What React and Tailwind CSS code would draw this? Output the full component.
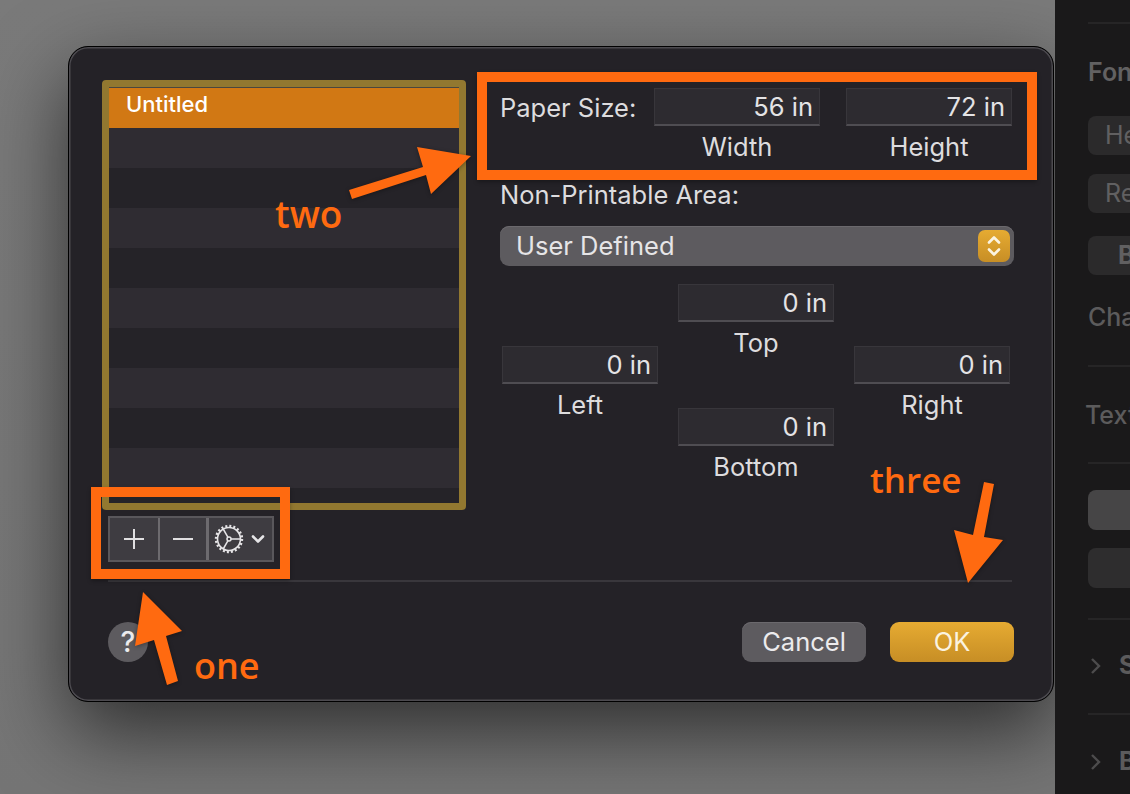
import React from "react";

const rows = [0, 1, 2, 3, 4, 5, 6, 7, 8];

const Field = ({ value, className = "" }) => (
  <div
    className={`h-[38px] bg-[#2d2b30] border border-[#38363b] border-b-2 border-b-[#4f4d52] flex items-center justify-end pr-[6px] text-[#e4e3e5] ${className}`}
  >
    {value}
  </div>
);

const LabeledField = ({ value, label, width = "w-[156px]" }) => (
  <div className={`${width} flex flex-col items-center`}>
    <Field value={value} className="w-full" />
    <div className="mt-[7px] h-[28px] leading-[28px] text-[#dddcde]">{label}</div>
  </div>
);

const GearIcon = () => (
  <svg width="30" height="30" viewBox="0 0 30 30" fill="none" stroke="#e6e5e7">
    <circle cx="15" cy="15" r="11.5" strokeWidth="1.6" />
    <circle cx="15" cy="15" r="13" strokeWidth="2.4" strokeDasharray="2 2.08" />
    <circle cx="15" cy="15" r="2" strokeWidth="1.5" />
    <path d="M17 15H26.5M14 13.3L9.2 5M14 16.7L9.2 25" strokeWidth="1.5" />
  </svg>
);

const SideChevron = () => (
  <svg width="14" height="18" viewBox="0 0 14 18" fill="none" stroke="#4d4c4d" strokeWidth="2.4" className="ml-[1px] shrink-0">
    <path d="M3 2l7 7-7 7" />
  </svg>
);

const SideBox = ({ text, bold, className = "" }) => (
  <div
    className={`h-[39px] w-full rounded-l-[8px] bg-[#2b2a2b] leading-[39px] text-[#616061] ${
      bold ? "font-bold pl-[30px]" : "pl-[17px]"
    } ${className}`}
  >
    {text}
  </div>
);

const Sidebar = () => (
  <div className="w-[75px] h-full shrink-0 bg-[#1a191a] pl-[33px] text-[25px] overflow-hidden whitespace-nowrap">
    <div className="mt-[22px] h-[2px] bg-[#262526]" />
    <div className="mt-[32px] h-[32px] leading-[32px] font-semibold text-[#626162]">Fon</div>
    <SideBox text="He" className="mt-[28px]" />
    <SideBox text="Re" className="mt-[19px]" />
    <SideBox text="B" bold className="mt-[23px]" />
    <div className="mt-[26px] h-[32px] leading-[32px] font-medium text-[#5c5b5c]">Cha</div>
    <div className="mt-[32px] h-[2px] bg-[#262526]" />
    <div className="mt-[32px] -ml-[3px] h-[32px] leading-[32px] font-medium text-[#5c5b5c]">Text</div>
    <div className="mt-[31px] h-[2px] bg-[#262526]" />
    <div className="mt-[26px] h-[40px] rounded-l-[8px] bg-[#464546]" />
    <div className="mt-[18px] h-[40px] rounded-l-[8px] bg-[#2e2d2e]" />
    <div className="mt-[30px] h-[2px] bg-[#262526]" />
    <div className="mt-[30px] h-[32px] flex items-center gap-[16px]">
      <SideChevron />
      <span className="font-bold text-[#5c5b5c]">S</span>
    </div>
    <div className="mt-[31px] h-[2px] bg-[#262526]" />
    <div className="mt-[31px] h-[32px] flex items-center gap-[16px]">
      <SideChevron />
      <span className="font-bold text-[#5c5b5c]">B</span>
    </div>
  </div>
);

const Dialog = () => (
  <div className="w-[986px] h-[656px] rounded-[20px] bg-[#242227] border border-black shadow-[inset_0_0_0_1.5px_#4c4a4f,0_30px_80px_rgba(0,0,0,0.6)] pt-[33px] pl-[33px]">
    <div className="flex">
      {/* Paper list */}
      <div className="w-[364px] h-[430px] border-[7px] border-[#927830] rounded-[4px] bg-[#252328] overflow-hidden">
        <div className="h-[1px] bg-[#4a473f]" />
        <div className="h-[40px] bg-[#d17814] pl-[17px] leading-[32px] font-medium text-white text-[22px]">
          Untitled
        </div>
        {rows.map((row) => (
          <div key={row} className={`h-[40px] ${row % 2 === 0 ? "bg-[#2f2c32]" : "bg-[#252328]"}`} />
        ))}
      </div>

      {/* Paper settings */}
      <div className="ml-[34px] w-[514px] pt-[8px] text-[25.5px] leading-none">
        <div className="flex">
          <div className="w-[154px] h-[38px] leading-[40px] text-[#dddcde]">Paper Size:</div>
          <LabeledField value="56 in" label="Width" width="w-[166px]" />
          <LabeledField value="72 in" label="Height" width="w-[166px] ml-[26px]" />
        </div>
        <div className="mt-[20px] h-[28px] leading-[28px] text-[#dddcde]">Non-Printable Area:</div>
        <div className="mt-[17px] h-[40px] rounded-[9px] bg-[#5d5b5f] shadow-[inset_0_1px_0_#6b696d] flex items-center justify-between pl-[16px] pr-[4px] text-[#e6e5e7]">
          <span>User Defined</span>
          <div className="w-[32px] h-[32px] rounded-[7px] bg-gradient-to-b from-[#e6ab32] to-[#c78e25] flex items-center justify-center">
            <svg width="18" height="26" viewBox="0 0 18 26" fill="none" stroke="#fbf3e0" strokeWidth="2.6" strokeLinecap="round" strokeLinejoin="round">
              <path d="M4 9.5L9 4.5l5 5M4 16.5l5 5 5-5" />
            </svg>
          </div>
        </div>
        <div className="mt-[18px] ml-[2px] flex gap-[20px]">
          <div className="pt-[62px]">
            <LabeledField value="0 in" label="Left" />
          </div>
          <div>
            <LabeledField value="0 in" label="Top" />
            <div className="mt-[51px]">
              <LabeledField value="0 in" label="Bottom" />
            </div>
          </div>
          <div className="pt-[62px]">
            <LabeledField value="0 in" label="Right" />
          </div>
        </div>
      </div>
    </div>

    {/* List toolbar */}
    <div className="mt-[6px] ml-[6px] w-[166px] h-[46px] flex bg-[#3e3c41] border-2 border-[#59575b]">
      <div className="w-[50px] flex items-center justify-center border-r-2 border-[#6d6b6f]">
        <svg width="22" height="22" viewBox="0 0 22 22" stroke="#e0dfe1" strokeWidth="2">
          <path d="M11 1v20M1 11h20" />
        </svg>
      </div>
      <div className="w-[49px] flex items-center justify-center border-r-[3px] border-[#6d6b6f]">
        <svg width="22" height="22" viewBox="0 0 22 22" stroke="#e0dfe1" strokeWidth="2">
          <path d="M1 11h20" />
        </svg>
      </div>
      <div className="flex-1 flex items-center pl-[5px] gap-[7px]">
        <GearIcon />
        <svg width="14" height="10" viewBox="0 0 14 10" fill="none" stroke="#e6e5e7" strokeWidth="2.6" strokeLinecap="round" strokeLinejoin="round">
          <path d="M2 2.5l5 5 5-5" />
        </svg>
      </div>
    </div>

    <div className="mt-[18px] ml-[6px] w-[904px] h-[2px] bg-[#39373c]" />

    {/* Footer */}
    <div className="mt-[40px] ml-[6px] w-[906px] flex items-center text-[25.5px] text-[#ecebed]">
      <div className="w-[40px] h-[40px] rounded-full bg-[#5d5b5f] flex items-center justify-center text-[28px] font-medium">?</div>
      <div className="ml-auto w-[124px] h-[40px] rounded-[9px] bg-[#5d5b5f] shadow-[inset_0_1px_0_#6b696d] flex items-center justify-center">
        Cancel
      </div>
      <div className="ml-[24px] w-[124px] h-[40px] rounded-[9px] bg-gradient-to-b from-[#e6ab32] to-[#c78e25] flex items-center justify-center text-[#fbf3e0]">
        OK
      </div>
    </div>
  </div>
);

const Annotations = () => (
  <>
    <div className="absolute left-[91px] top-[487px] w-[199px] h-[92px] border-[10px] border-[#ff6a10] shadow-[0_2px_4px_rgba(0,0,0,0.3)]" />
    <div className="absolute left-[477px] top-[72px] w-[560px] h-[108px] border-[10px] border-[#ff6a10] shadow-[0_2px_4px_rgba(0,0,0,0.3)]" />
    <svg className="absolute left-0 top-0 drop-shadow-[0_1px_2px_rgba(0,0,0,0.35)]" width="1130" height="794" fill="#ff6a10">
      <polygon points="349,190 423,167 417,147 471,156 431,194 426,175 352,199" />
      <polygon points="143,592 182,631 166,636 178,681 167,685 154,640 135,646" />
      <polygon points="984,482 994,484 984,537 1003,540 968,583 954,530 973,535" />
    </svg>
    <div className="absolute left-[275px] top-[192px] text-[37px] leading-[44px] font-semibold text-[#ff6a10]">two</div>
    <div className="absolute left-[194px] top-[644px] text-[36px] leading-[44px] font-semibold text-[#ff6a10]">one</div>
    <div className="absolute left-[870px] top-[458px] text-[35px] leading-[44px] font-semibold text-[#ff6a10]">three</div>
  </>
);

export default function App() {
  return (
    <div className="relative w-[1130px] h-[794px] overflow-hidden flex font-['Inter',sans-serif]">
      <div className="w-[1055px] h-full shrink-0 overflow-hidden bg-gradient-to-b from-[#7a7a7a] to-[#757575] pt-[46px] pl-[68px]">
        <Dialog />
      </div>
      <Sidebar />
      <div className="font-['Open_Sans',sans-serif]">
        <Annotations />
      </div>
    </div>
  );
}
